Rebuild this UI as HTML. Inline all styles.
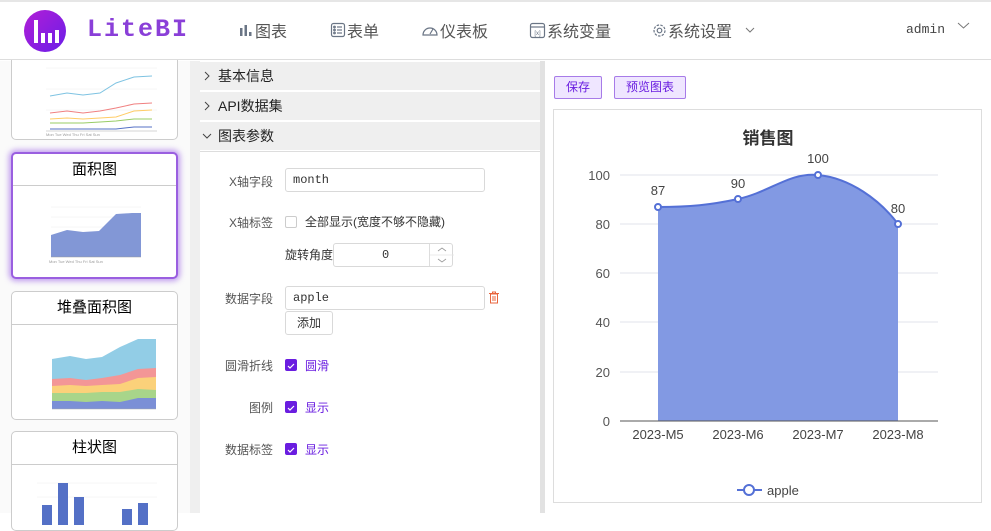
<!DOCTYPE html>
<html><head><meta charset="utf-8"><style>
*{box-sizing:border-box;margin:0;padding:0}
body{width:991px;height:513px;overflow:hidden;background:#fff;font-family:"Liberation Sans","Noto Sans CJK SC",sans-serif;position:relative;color:#333}
.a{position:absolute}
.hdr{left:0;top:0;width:991px;height:60px;background:#fff;border-top:2px solid #e6e6e6;border-bottom:1px solid #ddd;z-index:5}
.nav{font-size:16px;color:#555;top:18px;z-index:6;display:flex;align-items:center}
.nav svg{margin-right:1px}
.mono{font-family:"Liberation Mono","Noto Sans CJK SC",monospace}
.card{left:11px;width:167px;background:#fff;border:1px solid #ccc;border-radius:5px;overflow:hidden}
.card .t{height:33px;border-bottom:1px solid #ccc;text-align:center;font-size:15px;line-height:32px;color:#000}
.ch{left:200px;width:340px;height:28px;background:#efefef;font-size:14px;line-height:28px;padding-left:18px;color:#222}
.lbl{font-size:12px;color:#555;text-align:right;width:73px;left:200px}
.inp{border:1px solid #d9d9d9;border-radius:3px;font-size:12px;padding-left:7px;background:#fff}
.cb{width:12px;height:12px;border-radius:2px;background:#6a1de0}
.pl{font-size:12px;color:#6a1de0}
.btn{border:1px solid #a77be8;background:#efe6ff;color:#6a1de0;font-size:12px;border-radius:2px;text-align:center;line-height:21px;height:23px}
</style></head><body>
<div class="a hdr"></div>
<div class="a" style="left:24px;top:10px;width:42px;height:42px;border-radius:50%;background:linear-gradient(135deg,#b21fd6,#6a1de8);z-index:6">
<div class="a" style="left:10px;top:10px;width:4px;height:23px;background:#fff"></div>
<div class="a" style="left:17px;top:23px;width:4px;height:10px;background:#fff"></div>
<div class="a" style="left:24px;top:23px;width:4px;height:10px;background:#fff"></div>
<div class="a" style="left:31px;top:20px;width:4px;height:13px;background:#fff"></div></div>
<div class="a mono" style="left:87px;top:15px;font-size:25px;font-weight:bold;letter-spacing:2px;color:#8a3fd8;z-index:6">LiteBI</div>
<div class="a nav" style="left:238px"><svg width="16" height="16"><g fill="#6a7585"><rect x="2" y="6" width="2.5" height="8"/><rect x="6.5" y="3" width="2.5" height="11"/><rect x="11" y="10" width="2.5" height="4"/></g></svg>图表</div>
<div class="a nav" style="left:330px"><svg width="16" height="16" fill="none" stroke="#6a7585" stroke-width="1.2"><rect x="1.5" y="1.5" width="13" height="13" rx="2"/><line x1="7" y1="5" x2="12" y2="5"/><line x1="7" y1="8" x2="12" y2="8"/><line x1="7" y1="11" x2="12" y2="11"/><circle cx="4.5" cy="5" r=".8"/><circle cx="4.5" cy="8" r=".8"/><circle cx="4.5" cy="11" r=".8"/></svg>表单</div>
<div class="a nav" style="left:421px"><svg width="18" height="16" fill="none" stroke="#6a7585" stroke-width="1.2"><path d="M2,13 A7,7 0 1 1 16,13 Z"/><line x1="9" y1="12" x2="12" y2="7"/></svg>仪表板</div>
<div class="a nav" style="left:529px"><svg width="17" height="17" fill="none" stroke="#6a7585" stroke-width="1.2"><rect x="1.5" y="1.5" width="14" height="14" rx="2"/><line x1="1.5" y1="5" x2="15.5" y2="5"/><text x="8.5" y="13" font-size="6" text-anchor="middle" fill="#6a7585" stroke="none">[x]</text></svg>系统变量</div>
<div class="a nav" style="left:652px"><svg width="15" height="15" fill="none" stroke="#6a7585" stroke-width="1.2"><circle cx="7.5" cy="7.5" r="5.5" stroke-dasharray="2.5 1.3"/><circle cx="7.5" cy="7.5" r="2.3"/></svg>系统设置<svg width="12" height="12" style="margin-left:12px" fill="none" stroke="#777"><path d="M2,4 L6,8 L10,4"/></svg></div>
<div class="a mono" style="left:906px;top:22px;font-size:13px;color:#444;z-index:6">admin</div>
<svg class="a" style="left:957px;top:21px;z-index:6" width="13" height="10" fill="none" stroke="#777"><path d="M1,2 L6.5,7 L12,2"/></svg>

<!-- sidebar -->
<div class="a" style="left:0;top:61px;width:190px;height:452px;background:#fafafa"></div>
<div class="a" style="left:190px;top:61px;width:10px;height:452px;background:#efefef"></div>
<div class="a card" style="top:40px;height:100px">
<svg width="167" height="100" font-size="4" fill="#999"><g stroke="#eee" stroke-width=".5"><line x1="34" y1="27" x2="145" y2="27"/><line x1="34" y1="48" x2="145" y2="48"/><line x1="34" y1="69" x2="145" y2="69"/></g><g fill="none" stroke-width="1"><polyline points="38,55 55,52 71,54 88,52 104,42 122,36 140,35" stroke="#7ec3e2"/><polyline points="38,72 55,70 71,72 88,70 104,67 122,63 140,62" stroke="#f08080"/><polyline points="38,78 55,77 71,78 88,77 104,76 122,70 140,69" stroke="#fc6"/><polyline points="38,82 55,82 71,82 88,81 104,80 122,78 140,78" stroke="#9c6"/><polyline points="38,88 55,88 71,88 88,88 104,88 122,86 140,86" stroke="#5470c6"/></g><line x1="34" y1="90" x2="145" y2="90" stroke="#aaa" stroke-width=".5"/><text x="34" y="95">Mon  Tue  Wed  Thu  Fri  Sat  Sun</text></svg></div>
<div class="a card" style="top:152px;height:127px;border:2px solid #9a5fe0;box-shadow:0 0 6px 2px rgba(150,90,230,.6)">
<div class="t" style="height:32px">面积图</div>
<svg width="165" height="90" font-size="4" fill="#999"><g stroke="#eee" stroke-width=".5"><line x1="38" y1="21" x2="128" y2="21"/><line x1="38" y1="31" x2="128" y2="31"/><line x1="38" y1="41" x2="128" y2="41"/><line x1="38" y1="51" x2="128" y2="51"/><line x1="38" y1="61" x2="128" y2="61"/></g><polygon points="38,49 54,44 70,46 86,45 103,28 119,27 128,27 128,71 38,71" fill="#8297d6"/><line x1="38" y1="71" x2="128" y2="71" stroke="#999" stroke-width=".5"/><text x="36" y="77">Mon  Tue  Wed  Thu  Fri  Sat  Sun</text></svg></div>
<div class="a card" style="top:291px;height:129px"><div class="t">堆叠面积图</div>
<svg width="167" height="95"><polygon points="40,34 58,31 74,34 90,32 108,22 126,14 144,14 144,84 40,84" fill="#92cde6"/><polygon points="40,54 58,53 74,55 90,53 108,50 126,44 144,43 144,84 40,84" fill="#f39696"/><polygon points="40,61 58,60 74,61 90,60 108,59 126,53 144,52 144,84 40,84" fill="#fbd17a"/><polygon points="40,68 58,68 74,68 90,67 108,67 126,64 144,65 144,84 40,84" fill="#a8d58a"/><polygon points="40,76 58,76 74,77 90,76 108,77 126,73 144,73 144,84 40,84" fill="#7b8fd6"/><line x1="40" y1="84" x2="144" y2="84" stroke="#aaa" stroke-width=".5"/></svg></div>
<div class="a card" style="top:431px;height:100px"><div class="t">柱状图</div>
<svg width="167" height="60"><g stroke="#eee" stroke-width=".5"><line x1="25" y1="18" x2="145" y2="18"/><line x1="25" y1="32" x2="145" y2="32"/></g><g fill="#5470c6"><rect x="30" y="40" width="10" height="20"/><rect x="46" y="18" width="10" height="42"/><rect x="62" y="32" width="10" height="28"/><rect x="110" y="44" width="10" height="16"/><rect x="126" y="38" width="10" height="22"/></g></svg></div>

<!-- middle -->
<div class="a" style="left:200px;top:61px;width:340px;height:452px;background:#fff"></div>
<div class="a ch" style="top:62px">基本信息</div>
<div class="a ch" style="top:92px">API数据集</div>
<div class="a ch" style="top:122px">图表参数</div>
<svg class="a" style="left:203px;top:71px" width="8" height="10" fill="none" stroke="#444"><path d="M2,1 L6,5 L2,9"/></svg>
<svg class="a" style="left:203px;top:101px" width="8" height="10" fill="none" stroke="#444"><path d="M2,1 L6,5 L2,9"/></svg>
<svg class="a" style="left:202px;top:132px" width="10" height="8" fill="none" stroke="#444"><path d="M1,2 L5,6 L9,2"/></svg>
<div class="a" style="left:200px;top:151px;width:340px;height:1px;background:#ddd"></div>
<div class="a lbl" style="top:173px">X轴字段</div>
<div class="a inp mono" style="left:285px;top:168px;width:200px;height:24px;line-height:22px">month</div>
<div class="a lbl" style="top:214px">X轴标签</div>
<div class="a" style="left:285px;top:216px;width:12px;height:12px;border:1px solid #ccc;border-radius:2px"></div>
<div class="a" style="left:305px;top:213px;font-size:12px;color:#333">全部显示(宽度不够不隐藏)</div>
<div class="a" style="left:285px;top:246px;font-size:12px;color:#333">旋转角度</div>
<div class="a inp mono" style="left:333px;top:243px;width:120px;height:24px;line-height:22px;padding-left:0"><span style="position:absolute;left:48px">0</span><span style="position:absolute;left:95px;top:0;width:24px;height:22px;border-left:1px solid #ddd"><svg width="24" height="22" fill="none" stroke="#999" stroke-width=".8"><path d="M8,7 L12,4 L16,7"/><line x1="0" y1="11" x2="24" y2="11" stroke="#e5e5e5"/><path d="M8,15 L12,18 L16,15"/></svg></span></div>
<div class="a lbl" style="top:290px">数据字段</div>
<div class="a inp mono" style="left:285px;top:286px;width:200px;height:24px;line-height:22px">apple</div>
<svg class="a" style="left:488px;top:291px" width="12" height="13" fill="none" stroke="#e8643c" stroke-width="1"><line x1="1" y1="2.5" x2="11" y2="2.5"/><path d="M4.5,2.5 V1 H7.5 V2.5"/><rect x="2.5" y="3" width="7" height="9"/><line x1="5" y1="5" x2="5" y2="10"/><line x1="7" y1="5" x2="7" y2="10"/></svg>
<div class="a" style="left:285px;top:311px;width:48px;height:24px;border:1px solid #d9d9d9;border-radius:3px;font-size:12px;text-align:center;line-height:22px">添加</div>
<div class="a lbl" style="top:357px">圆滑折线</div>
<div class="a cb" style="left:285px;top:359px"><svg width="12" height="12" fill="none" stroke="#fff" stroke-width="1.2"><path d="M3,6 L5,8 L9,4"/></svg></div><div class="a pl" style="left:305px;top:357px">圆滑</div>
<div class="a lbl" style="top:399px">图例</div>
<div class="a cb" style="left:285px;top:401px"><svg width="12" height="12" fill="none" stroke="#fff" stroke-width="1.2"><path d="M3,6 L5,8 L9,4"/></svg></div><div class="a pl" style="left:305px;top:399px">显示</div>
<div class="a lbl" style="top:441px">数据标签</div>
<div class="a cb" style="left:285px;top:443px"><svg width="12" height="12" fill="none" stroke="#fff" stroke-width="1.2"><path d="M3,6 L5,8 L9,4"/></svg></div><div class="a pl" style="left:305px;top:441px">显示</div>

<div class="a" style="left:540px;top:61px;width:5px;height:452px;background:#e2e2e2"></div>

<!-- right -->
<div class="a btn" style="left:554px;top:76px;width:48px">保存</div>
<div class="a btn" style="left:614px;top:76px;width:72px">预览图表</div>
<div class="a" style="left:553px;top:109px;width:429px;height:394px;border:1px solid #ddd"></div>
<svg class="a" style="left:545px;top:61px" width="446" height="452" font-family="Liberation Sans,Noto Sans CJK SC,sans-serif">
<g transform="translate(-545,-61)">
<text x="768" y="144" text-anchor="middle" font-size="17" font-weight="bold" fill="#333">销售图</text>
<g stroke="#e0e3eb" stroke-width="1"><line x1="620" y1="175" x2="938" y2="175"/><line x1="620" y1="224" x2="938" y2="224"/><line x1="620" y1="273" x2="938" y2="273"/><line x1="620" y1="322" x2="938" y2="322"/><line x1="620" y1="372" x2="938" y2="372"/></g>
<g font-size="13" fill="#555" text-anchor="end"><text x="610" y="180">100</text><text x="610" y="229">80</text><text x="610" y="278">60</text><text x="610" y="327">40</text><text x="610" y="377">20</text><text x="610" y="426">0</text></g>
<path d="M658,207 C690,207 710,205 738,199 C770,192 790,172 818,175 C850,178 880,200 898,224 L898,421 L658,421Z" fill="#8299e3"/>
<path d="M658,207 C690,207 710,205 738,199 C770,192 790,172 818,175 C850,178 880,200 898,224" fill="none" stroke="#5470d6" stroke-width="2"/>
<line x1="620" y1="421" x2="938" y2="421" stroke="#555"/>
<g fill="#fff" stroke="#5470d6" stroke-width="2"><circle cx="658" cy="207" r="3"/><circle cx="738" cy="199" r="3"/><circle cx="818" cy="175" r="3"/><circle cx="898" cy="224" r="3"/></g>
<g font-size="13" fill="#444" text-anchor="middle"><text x="658" y="195">87</text><text x="738" y="188">90</text><text x="818" y="163">100</text><text x="898" y="213">80</text>
<text x="658" y="439">2023-M5</text><text x="738" y="439">2023-M6</text><text x="818" y="439">2023-M7</text><text x="898" y="439">2023-M8</text></g>
<line x1="737" y1="490" x2="762" y2="490" stroke="#5470d6" stroke-width="2"/><circle cx="749" cy="490" r="5" fill="#fff" stroke="#5470d6" stroke-width="2"/>
<text x="767" y="495" font-size="13" fill="#444">apple</text>
</g></svg>
</body></html>
